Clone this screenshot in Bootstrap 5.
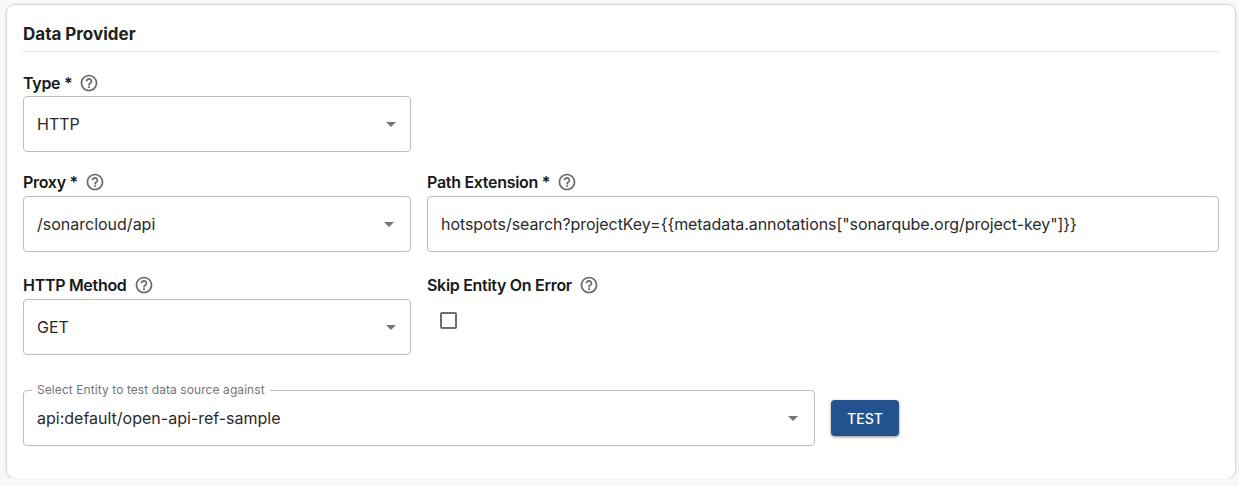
<!DOCTYPE html>
<html lang="en">
<head>
  <meta charset="UTF-8">
  <title>Data Provider</title>
  <link href="https://cdn.jsdelivr.net/npm/bootstrap@5.3.3/dist/css/bootstrap.min.css" rel="stylesheet">
  <style>
    body {
      background: #f8f8f8;
      font-family: Inter, "Liberation Sans", sans-serif;
      color: #181818;
      overflow: hidden;
    }
    .provider-card {
      margin: 5px 4px 0 7px;
      height: 473px;
      padding: 16px;
      background: #fff;
      border: 0;
      border-radius: 8px;
      box-shadow: 0 0 2px 1px rgba(0, 0, 0, 0.16);
    }
    .provider-title {
      font-size: 17px;
      font-weight: 700;
      line-height: 24px;
      margin: 1px 0 0;
      padding-bottom: 5px;
      color: #222;
      border-bottom: 1px solid #e2e2e2;
    }
    .field-label {
      display: flex;
      align-items: center;
      height: 20px;
      margin-bottom: 3px;
      font-size: 16px;
      font-weight: 600;
      letter-spacing: -0.3px;
      line-height: 20px;
    }
    .second-row .field-label,
    .third-row .field-label {
      margin-bottom: 4px;
    }
    .help-icon {
      width: 20px;
      height: 20px;
      margin-left: 7px;
      fill: #666;
    }
    .form-control.field-box,
    .form-select.field-box {
      height: 56px;
      padding: 0 13px;
      font-size: 16px;
      color: #2a2a2a;
      border: 1px solid #bdbdbd;
      border-radius: 4px;
      box-shadow: none;
    }
    .form-control.field-box {
      letter-spacing: -0.07px;
    }
    .form-select.field-box {
      background-image: url("data:image/svg+xml,%3Csvg xmlns='http://www.w3.org/2000/svg' viewBox='0 0 24 24'%3E%3Cpath fill='%23757575' d='M7 10l5 5 5-5z'/%3E%3C/svg%3E");
      background-position: right 7px center;
      background-size: 24px 24px;
    }
    .form-select.arrow-proxy {
      background-position: right 9px center;
    }
    .form-select.arrow-entity {
      background-position: right 9px center;
    }
    .skip-check.form-check-input {
      display: block;
      width: 17px;
      height: 17px;
      margin: 0 0 0 13px;
      border: 2px solid #6e6e6e;
      border-radius: 2px;
    }
    .skip-wrap {
      padding-top: 13px;
    }
    .entity-field {
      position: relative;
    }
    .entity-label {
      position: absolute;
      top: -7px;
      left: 9px;
      padding: 0 5px;
      background: #fff;
      color: #757575;
      font-size: 12px;
      letter-spacing: 0.08px;
      line-height: 14px;
    }
    .test-btn.btn {
      width: 68px;
      height: 36px;
      padding: 0;
      background: #23538f;
      border: 0;
      border-radius: 4px;
      color: #fff;
      font-size: 14px;
      font-weight: 500;
      box-shadow: 0 1px 3px rgba(0, 0, 0, 0.45);
    }
    .first-row { margin-top: 21px; }
    .second-row { margin-top: 20px; }
    .third-row { margin-top: 23px; }
    .entity-row { margin-top: 35px; }
  </style>
</head>
<body>

<svg width="0" height="0" class="position-absolute">
  <symbol id="help" viewBox="0 0 24 24">
    <path d="M11 18h2v-2h-2v2zm1-16C6.48 2 2 6.48 2 12s4.48 10 10 10 10-4.48 10-10S17.52 2 12 2zm0 18c-4.41 0-8-3.59-8-8s3.59-8 8-8 8 3.59 8 8-3.59 8-8 8zm0-14c-2.21 0-4 1.79-4 4h2c0-1.1.9-2 2-2s2 .9 2 2c0 2-3 1.75-3 5h2c0-2.25 3-2.5 3-5 0-2.21-1.79-4-4-4z"/>
  </symbol>
</svg>

<div class="card provider-card">
  <h6 class="provider-title">Data Provider</h6>

  <div class="row gx-3 first-row">
    <div class="col-4">
      <label class="field-label">Type *<svg class="help-icon"><use href="#help"/></svg></label>
      <select class="form-select field-box"><option>HTTP</option></select>
    </div>
  </div>

  <div class="row gx-3 second-row">
    <div class="col-4">
      <label class="field-label">Proxy *<svg class="help-icon"><use href="#help"/></svg></label>
      <select class="form-select field-box arrow-proxy"><option>/sonarcloud/api</option></select>
    </div>
    <div class="col-8">
      <label class="field-label">Path Extension *<svg class="help-icon"><use href="#help"/></svg></label>
      <input type="text" class="form-control field-box" value='hotspots/search?projectKey={{metadata.annotations["sonarqube.org/project-key"]}}'>
    </div>
  </div>

  <div class="row gx-3 third-row">
    <div class="col-4">
      <label class="field-label">HTTP Method<svg class="help-icon"><use href="#help"/></svg></label>
      <select class="form-select field-box"><option>GET</option></select>
    </div>
    <div class="col-8">
      <label class="field-label">Skip Entity On Error<svg class="help-icon"><use href="#help"/></svg></label>
      <div class="skip-wrap"><input type="checkbox" class="form-check-input skip-check"></div>
    </div>
  </div>

  <div class="row gx-3 align-items-center entity-row">
    <div class="col-8">
      <div class="entity-field">
        <label class="entity-label">Select Entity to test data source against</label>
        <select class="form-select field-box arrow-entity"><option>api:default/open-api-ref-sample</option></select>
      </div>
    </div>
    <div class="col-4">
      <button type="button" class="btn test-btn">TEST</button>
    </div>
  </div>
</div>

</body>
</html>
